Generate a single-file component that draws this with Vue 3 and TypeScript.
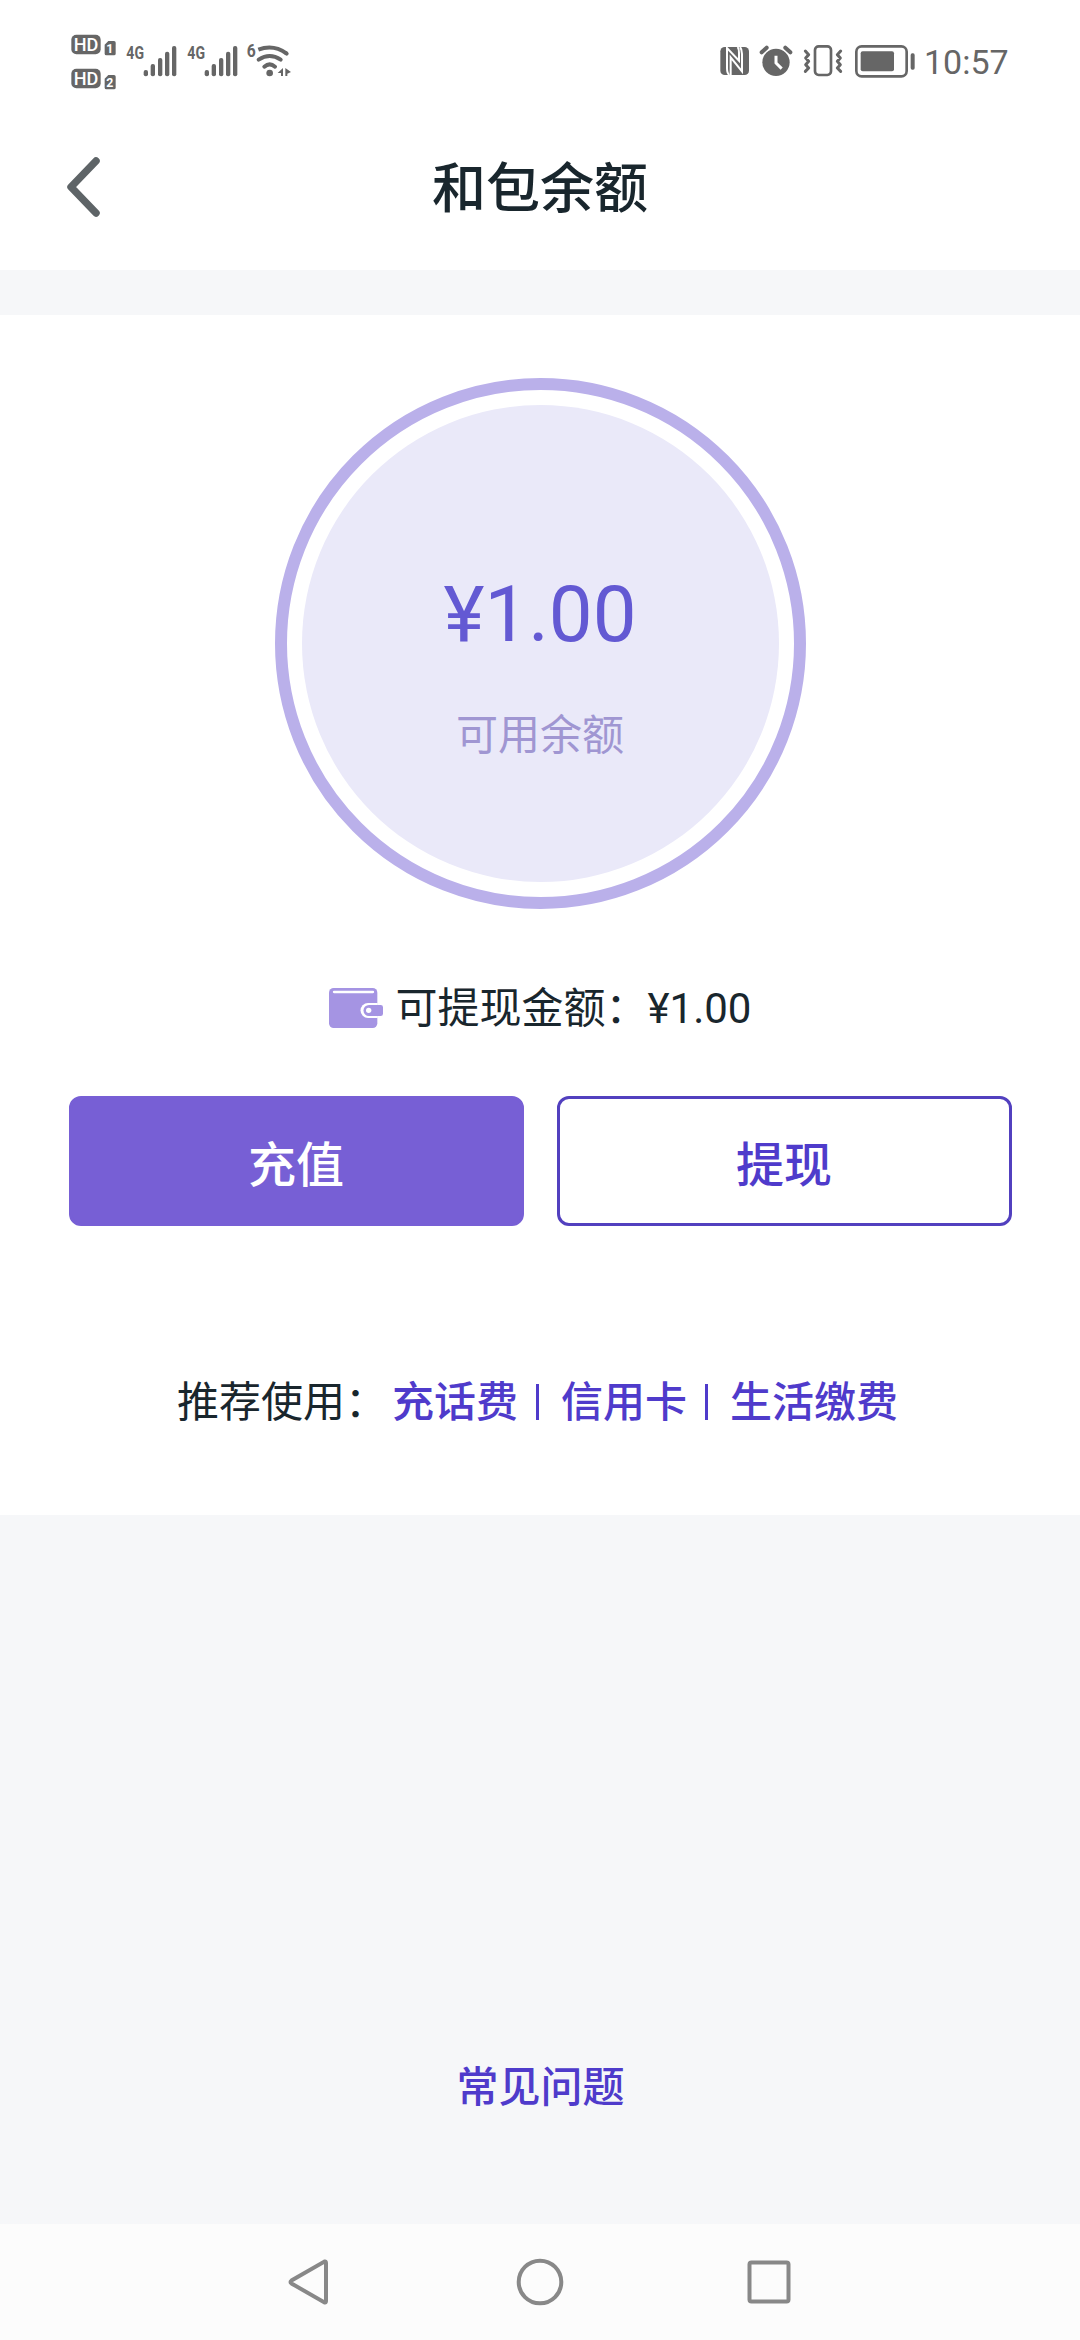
<script setup lang="ts">
interface Shortcut {
  id: string
  label: string
}

const title = '和包余额'
const balance = '¥1.00'
const withdrawable = '¥1.00'
const time = '10:57'

const shortcuts: Shortcut[] = [
  { id: 'phone', label: '充话费' },
  { id: 'credit', label: '信用卡' },
  { id: 'bills', label: '生活缴费' },
]

const signalOffsets = [0, 183]
const signalBars = [
  { x: 251, y: 150 },
  { x: 272, y: 132 },
  { x: 294, y: 114 },
  { x: 315, y: 95 },
  { x: 336, y: 78 },
]
const simSlots = [
  { n: '1', y: 0 },
  { n: '2', y: 102 },
]
</script>

<template>
  <div class="page">
    <header class="status">
      <svg class="status-left" viewBox="0 0 720 240" fill="#666">
        <g v-for="s in simSlots" :key="s.n" :transform="`translate(0 ${s.y})`">
          <rect x="34" y="44" width="88" height="59" rx="15" />
          <text x="41" y="93" class="hd" textLength="74" lengthAdjust="spacingAndGlyphs">HD</text>
          <path d="M145 63h17q5 0 5 5v33q0 5-5 5h-23q-5 0-5-5V74z" />
          <text x="139" y="98" class="sim">{{ s.n }}</text>
        </g>
        <g v-for="o in signalOffsets" :key="o" :transform="`translate(${o} 0)`">
          <text x="199" y="118" class="net" textLength="53" lengthAdjust="spacingAndGlyphs">4G</text>
          <rect v-for="b in signalBars" :key="b.x" :x="b.x" :y="b.y" width="13" :height="169 - b.y" rx="6" />
        </g>
        <text x="560" y="111" class="net" textLength="27" lengthAdjust="spacingAndGlyphs">6</text>
        <g fill="none" stroke="#666" stroke-width="12">
          <path d="M595 89Q640 72 679 100" />
          <path d="M680 101l-1-1M596 119Q629 97 662 119M613 140Q629 126 645 140" stroke-linecap="round" />
        </g>
        <circle cx="629" cy="159" r="10" />
        <path d="M653 159l16-15v24h-6v-9zM676 144l17 12-11 5v7h-6z" />
      </svg>
      <div class="status-right">
        <svg class="status-icons" viewBox="0 0 663 240" fill="#666">
          <rect x="61" y="81" width="86" height="84" rx="13" />
          <g fill="none" stroke="#fff" stroke-width="6">
            <path d="M88 165q-7-5-7-20V84l36 38V98q0-11-4-17" />
            <path d="M92 165v-53l34 42V102q0-14-6-21" />
          </g>
          <circle cx="228" cy="127" r="41" />
          <path d="M185 97l15-14M271 97l-15-14" stroke="#666" stroke-width="12" stroke-linecap="round" />
          <path d="M228 107v22l17 17" fill="none" stroke="#fff" stroke-width="9" />
          <rect x="345" y="79" width="48" height="86" rx="11" fill="none" stroke="#666" stroke-width="8" />
          <path d="M316 93l10 11-9 10 9 10-9 10 9 10-10 10M422 93l-10 11 9 10-9 10 9 10-9 10 10 10" fill="none" stroke="#666" stroke-width="9" stroke-linecap="round" stroke-linejoin="round" />
          <rect x="469" y="79" width="151" height="90" rx="16" fill="none" stroke="#666" stroke-width="8" />
          <rect x="482" y="94" width="100" height="60" rx="6" />
          <rect x="632" y="100" width="12" height="49" rx="5" />
        </svg>
        <span class="time">{{ time }}</span>
      </div>
    </header>

    <nav class="titlebar">
      <svg class="back" viewBox="0 0 36 64" fill="none" stroke="#5e6467" stroke-width="7.500" stroke-linecap="round" stroke-linejoin="round">
        <path d="M31 6L6 32l25 26" />
      </svg>
      <h1>{{ title }}</h1>
    </nav>

    <main class="card">
      <section class="ring">
        <div class="disc">
          <span class="amount">{{ balance }}</span>
          <span class="caption">可用余额</span>
        </div>
      </section>

      <p class="withdraw">
        <svg class="wallet" viewBox="0 0 162 120">
          <rect width="145" height="120" rx="14" fill="#a594e3" />
          <path d="M15 12h117" stroke="#fff" stroke-width="7" stroke-linecap="round" />
          <path d="M146 45h-29a22 22 0 0 0 0 45h29z" fill="#fff" />
          <path d="M155 51h-35a16 16 0 0 0 0 33h35q7 0 7-7V58q0-7-7-7z" fill="#a594e3" />
          <circle cx="119" cy="67" r="8" fill="#fff" />
        </svg>
        <span>可提现金额：</span><span>{{ withdrawable }}</span>
      </p>

      <div class="actions">
        <button class="btn primary" type="button">充值</button>
        <button class="btn outline" type="button">提现</button>
      </div>

      <div class="recommend">
        <span class="lead">推荐使用：</span>
        <a v-for="s in shortcuts" :key="s.id" class="link">{{ s.label }}</a>
      </div>
    </main>

    <div class="faq"><a>常见问题</a></div>

    <footer class="sysnav">
      <svg viewBox="0 0 48 48"><path d="M37.500 3.500Q39 3 39 5v38Q39 45 37.500 44.500L4.500 25.500Q2.500 24 4.500 22.500z" /></svg>
      <svg viewBox="0 0 48 48"><circle cx="24" cy="24" r="21.300" /></svg>
      <svg viewBox="0 0 48 48"><rect x="4.500" y="4.500" width="39" height="39" rx="2" /></svg>
    </footer>
  </div>
</template>

<style>
body {
  background: #f6f7f9;
}
</style>

<style scoped>
.page {
  width: 1080px;
  height: 2340px;
  display: flex;
  flex-direction: column;
  overflow: hidden;
  background: #f6f7f9;
  color: #19262d;
  font-family: Roboto, 'Noto Sans CJK SC', sans-serif;
}

.status {
  height: 120px;
  flex: none;
  box-sizing: border-box;
  padding: 20px 71px 0 60px;
  display: flex;
  justify-content: space-between;
  align-items: flex-start;
  background: #fff;
}

.status-left {
  width: 240px;
  height: 80px;
}

.status-right {
  display: flex;
}

.status-icons {
  width: 221px;
  height: 80px;
}

.time {
  width: 88px;
  padding-left: 3px;
  box-sizing: border-box;
  font-size: 34px;
  line-height: 84px;
  color: #666;
  white-space: nowrap;
}

.hd {
  font: 500 55px Roboto, sans-serif;
  fill: #fff;
}

.sim {
  font: 700 37px Roboto, sans-serif;
  fill: #fff;
}

.net {
  font: 700 54px Roboto, sans-serif;
}

.titlebar {
  height: 150px;
  flex: none;
  display: grid;
  grid-template-columns: 200px 1fr 200px;
  background: #fff;
}

.back {
  width: 36px;
  height: 64px;
  margin: 35px 0 0 65px;
}

h1 {
  margin: 0;
  text-align: center;
  font-size: 54px;
  font-weight: 500;
  line-height: 140px;
}

.card {
  height: 1200px;
  flex: none;
  margin-top: 45px;
  box-sizing: border-box;
  padding-top: 63px;
  display: flex;
  flex-direction: column;
  align-items: center;
  background: #fff;
}

.ring {
  width: 531px;
  height: 531px;
  box-sizing: border-box;
  border: 12px solid #bab0ea;
  border-radius: 50%;
  padding: 15px;
  flex: none;
}

.disc {
  height: 477px;
  border-radius: 50%;
  background: #eae9f9;
  display: flex;
  flex-direction: column;
  align-items: center;
}

.amount {
  margin-top: 160px;
  font-size: 78px;
  line-height: 100px;
  color: #6359d3;
}

.caption {
  margin-top: 41px;
  font-size: 42px;
  line-height: 60px;
  color: #a096d2;
}

.withdraw {
  display: flex;
  align-items: center;
  margin: 69px 0 0;
  height: 60px;
  font-size: 42px;
  line-height: 60px;
  white-space: nowrap;
}

.withdraw span {
  padding-top: 2px;
}

.wallet {
  width: 54px;
  height: 40px;
  margin-right: 13px;
}

.actions {
  display: flex;
  gap: 33px;
  margin-top: 58px;
}

.btn {
  width: 455px;
  height: 130px;
  box-sizing: border-box;
  padding: 0;
  border: 3px solid #775fd5;
  border-radius: 12px;
  font: 500 48px/124px 'Noto Sans CJK SC', sans-serif;
}

.primary {
  background: #775fd5;
  color: #fff;
}

.outline {
  background: #fff;
  border-color: #5240bf;
  color: #4f3bcb;
}

.recommend {
  display: flex;
  align-items: center;
  align-self: flex-start;
  margin: 147px 0 0 177px;
  font-size: 42px;
  line-height: 60px;
}

.lead {
  width: 215px;
}

.link {
  display: flex;
  align-items: center;
  color: #4f3bcb;
  font-weight: 500;
}

.link + .link::before {
  content: '';
  width: 3px;
  height: 36px;
  margin: -2px 22px 0 18px;
  background: #4f3bcb;
}

.faq {
  flex: 1;
  padding: 543px 0 0 1px;
  text-align: center;
  font-size: 42px;
  font-weight: 500;
  line-height: 60px;
  color: #4f3bcb;
}

.sysnav {
  height: 116px;
  flex: none;
  display: flex;
  justify-content: center;
  align-items: center;
  gap: 181px;
  background: #fcfcfc;
}

.sysnav svg {
  width: 48px;
  height: 48px;
  fill: none;
  stroke: #888;
  stroke-width: 4;
}
</style>
